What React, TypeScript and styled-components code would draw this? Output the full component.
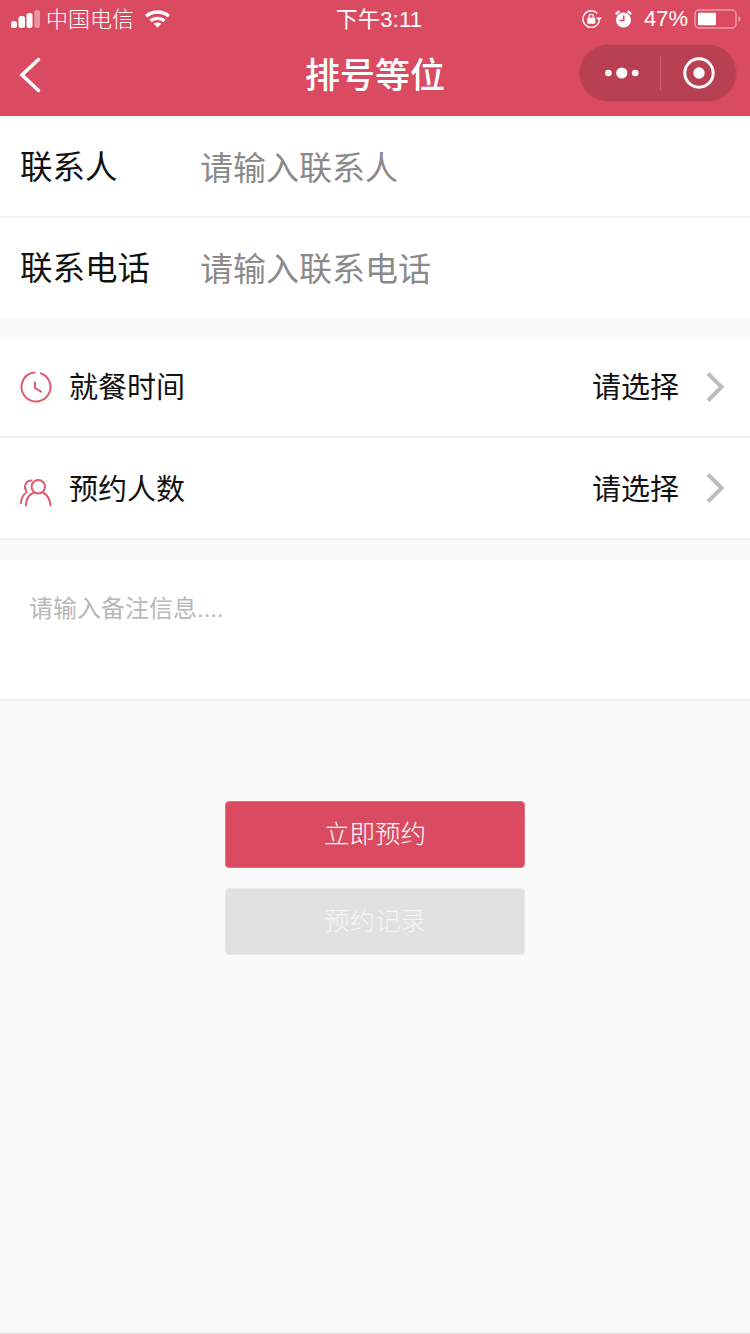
import React from 'react'
import styled, { createGlobalStyle } from 'styled-components'

const RED = '#da4b61'
const CJK = '"Noto Sans CJK SC", "Liberation Sans", sans-serif'
const LATIN_FIRST = '"Liberation Sans", "Noto Sans CJK SC", sans-serif'

const GlobalStyle = createGlobalStyle`
  html, body {
    margin: 0;
    padding: 0;
    background: #fafafa;
  }
  * {
    box-sizing: border-box;
  }
`

const Page = styled.div`
  width: 750px;
  height: 1334px;
  background: #fafafa;
  font-family: ${CJK};
  overflow: hidden;
  display: flex;
  flex-direction: column;
  border-bottom: 1px solid #dcdcdc;
`

const Header = styled.div`
  height: 116px;
  flex: none;
  background: ${RED};
  color: #fff;
  display: flex;
  flex-direction: column;
`

const StatusBar = styled.div`
  height: 40px;
  padding: 0 9px 3px 11px;
  display: grid;
  grid-template-columns: 1fr auto 1fr;
  align-items: center;
  font-size: 22px;
`

const StatusLeft = styled.div`
  display: flex;
  align-items: center;
`

const StatusRight = styled.div`
  display: flex;
  align-items: center;
  justify-content: flex-end;
  gap: 13px;
`

const Carrier = styled.span`
  margin: 0 11px 3px 6px;
  font-weight: 300;
`

const Clock = styled.span`
  margin: 0 0 3px 6px;
  font-family: ${LATIN_FIRST};
  font-size: 22px;
  letter-spacing: 0.2px;
`

const Percent = styled.span`
  font-family: "Liberation Sans", sans-serif;
  font-size: 22px;
  margin-left: -1px;
  margin-right: -7px;
`

const NavBar = styled.div`
  height: 76px;
  padding: 0 13px;
  display: grid;
  grid-template-columns: 1fr auto 1fr;
  align-items: center;
`

const BackSlot = styled.div`
  display: flex;
  margin: 0 0 6px 6px;
`

const Title = styled.div`
  font-size: 35px;
  font-weight: 500;
  line-height: 50px;
  margin-bottom: 10px;
`

const Capsule = styled.div`
  justify-self: end;
  width: 158px;
  height: 58px;
  margin-bottom: 11px;
  border-radius: 29px;
  background: #b93f53;
  border: 1px solid #c9495d;
  display: flex;
  align-items: center;
`

const CapsuleSide = styled.div<{ $nudge: number }>`
  flex: 1;
  display: flex;
  align-items: center;
  justify-content: center;
  padding-left: ${p => p.$nudge}px;
`

const CapsuleDivider = styled.div`
  width: 1px;
  height: 34px;
  background: #d0606f;
`

const Card = styled.div`
  background: #fff;
`

const FieldRow = styled.div<{ $divider?: boolean }>`
  height: ${p => (p.$divider ? 102 : 99)}px;
  display: flex;
  align-items: center;
  padding-left: 20px;
  border-bottom: ${p => (p.$divider ? '2px solid #f2f2f2' : 'none')};
`

const FieldLabel = styled.span`
  width: 180px;
  margin-bottom: 4px;
  font-size: 32.5px;
  color: #111;
`

const FieldHint = styled.span`
  margin-bottom: 1px;
  font-size: 33px;
  color: #8a8a8a;
`

const Gap = styled.div<{ $h: number }>`
  height: ${p => p.$h}px;
  flex: none;
`

const PickRow = styled.div<{ $tall?: boolean }>`
  height: ${p => (p.$tall ? 102 : 101)}px;
  display: flex;
  align-items: center;
  padding: 0 25px 0 20px;
  border-bottom: 2px solid #f1f1f1;
`

const PickLabel = styled.span`
  margin: 0 0 3px 17px;
  flex: 1;
  font-size: 29px;
  color: #111;
`

const PickValue = styled.span`
  margin: 0 26px 3px 0;
  font-size: 29px;
  color: #111;
`

const IconSlot = styled.div<{ $drop?: number }>`
  display: flex;
  margin-top: ${p => p.$drop ?? 0}px;
`

const Remark = styled.div`
  height: 141px;
  flex: none;
  background: #fff;
  padding: 32px 29px 0;
  font-family: ${LATIN_FIRST};
  font-size: 24px;
  line-height: 34px;
  color: #b8b8b8;
  border-bottom: 2px solid #f0f0f0;
`

const Actions = styled.div`
  margin-top: 100px;
  display: flex;
  flex-direction: column;
  align-items: center;
  gap: 20px;
`

const ActionButton = styled.div<{ $muted?: boolean }>`
  width: 300px;
  height: 67px;
  padding-bottom: 7px;
  border-radius: 4px;
  display: flex;
  align-items: center;
  justify-content: center;
  font-size: 25.5px;
  font-weight: 300;
  color: ${p => (p.$muted ? '#f4f4f4' : '#fff')};
  background: ${p => (p.$muted ? '#e1e1e1' : RED)};
  border: 1px solid ${p => (p.$muted ? '#e8e8e8' : '#e2707f')};
`

const Signal = () => (
  <svg width="29" height="18" viewBox="0 0 29 18" fill="#fff">
    <rect x="0" y="11" width="6" height="7" rx="2.500" />
    <rect x="7.500" y="6" width="6.500" height="12" rx="2.500" />
    <rect x="15.500" y="3" width="6" height="15" rx="2.500" />
    <rect x="23.300" y="0" width="5.700" height="18" rx="2.500" opacity="0.4" />
  </svg>
)

const Wifi = () => (
  <svg width="25" height="18" viewBox="0 0 25 18" fill="none" stroke="#fff" strokeWidth="3.400">
    <path d="M1.200 6.200C7.500 .6 17.500 .6 23.800 6.200" />
    <path d="M5.500 10.800C9.500 7.600 15.500 7.600 19.500 10.800" />
    <path d="M12.500 17.800l-3.800-4.200c2.200-1.500 5.400-1.500 7.600 0z" fill="#fff" stroke="none" />
  </svg>
)

const RotationLock = () => (
  <svg width="20" height="18" viewBox="0 0 20 18" fill="none">
    <path d="M17.400 10.500A8.300 8.300 0 1 1 15.300 3.400" stroke="#fff" strokeWidth="1.400" />
    <path d="M14 7.500h6l-3 3.600z" fill="#fff" />
    <rect x="5.300" y="7.800" width="8" height="6" rx="1" fill="#fff" />
    <path d="M7.200 7.800V6.400a2.100 2.100 0 0 1 4.200 0v1.400" stroke="#fff" strokeWidth="1.300" />
  </svg>
)

const Alarm = () => (
  <svg width="17" height="18" viewBox="0 0 17 18" fill="none">
    <circle cx="8.500" cy="10" r="7.500" fill="#fff" />
    <path d="M8.700 5.500V10.500H4.500" stroke={RED} strokeWidth="1.600" />
    <path d="M.8 4.200L4.300 1.200M16.200 4.200L12.700 1.200" stroke="#fff" strokeWidth="2.200" />
  </svg>
)

const Battery = () => (
  <svg width="47" height="20" viewBox="0 0 47 20" fill="none">
    <rect x="1" y="1" width="41" height="18" rx="4" stroke="#fff" strokeOpacity="0.45" strokeWidth="1.500" />
    <rect x="4" y="3.700" width="18" height="12.600" rx="1" fill="#fff" />
    <path d="M44.500 7c1.500.4 2 1.400 2 3s-.5 2.600-2 3z" fill="#fff" fillOpacity="0.45" />
  </svg>
)

const BackArrow = () => (
  <svg width="22" height="36" viewBox="0 0 22 36" fill="none" stroke="#fff" strokeWidth="3.500" strokeLinecap="round">
    <path d="M19.500 2.500L3 18l16.500 15.500" />
  </svg>
)

const MoreDots = () => (
  <svg width="34" height="12" viewBox="0 0 34 12" fill="#fff">
    <circle cx="3.400" cy="6" r="3.300" />
    <circle cx="16.800" cy="6" r="5.600" />
    <circle cx="30.200" cy="6" r="3.300" />
  </svg>
)

const CloseRing = () => (
  <svg width="32" height="32" viewBox="0 0 32 32" fill="none">
    <circle cx="16" cy="16" r="14.200" stroke="#fff" strokeWidth="3" />
    <circle cx="16" cy="16" r="5.700" fill="#fff" />
  </svg>
)

const ClockIcon = () => (
  <svg width="32" height="32" viewBox="0 0 32 32" fill="none" stroke="#e0596e" strokeWidth="2" strokeLinecap="round">
    <circle cx="16" cy="16" r="14.500" strokeDasharray="84 7" transform="rotate(-70 16 16)" />
    <path d="M15 11.500V17l6 3.700" />
  </svg>
)

const PeopleIcon = () => (
  <svg width="32" height="28" viewBox="0 0 32 28" fill="none" stroke="#e0596e" strokeWidth="2" strokeLinecap="round">
    <circle cx="18.300" cy="7.700" r="6.700" />
    <path d="M6 26.500c.2-6.500 3-11 7.500-12.500" />
    <path d="M23.500 14c3.800 2 6.500 6.500 7 12.500" />
    <path d="M11.500 1.500C6 1.500 3 7.500 6.500 12" />
    <path d="M1 24c.2-4.500 2-8.500 5.500-10.500" />
  </svg>
)

const Chevron = () => (
  <svg width="20" height="32" viewBox="0 0 20 32" fill="none" stroke="#bdbdbd" strokeWidth="4">
    <path d="M3 2.500L16.500 16 3 29.500" />
  </svg>
)

export default function App() {
  return (
    <Page>
      <GlobalStyle />
      <Header>
        <StatusBar>
          <StatusLeft>
            <Signal />
            <Carrier>中国电信</Carrier>
            <Wifi />
          </StatusLeft>
          <Clock>下午3:11</Clock>
          <StatusRight>
            <RotationLock />
            <Alarm />
            <Percent>47%</Percent>
            <Battery />
          </StatusRight>
        </StatusBar>
        <NavBar>
          <BackSlot>
            <BackArrow />
          </BackSlot>
          <Title>排号等位</Title>
          <Capsule>
            <CapsuleSide $nudge={5}>
              <MoreDots />
            </CapsuleSide>
            <CapsuleDivider />
            <CapsuleSide $nudge={1}>
              <CloseRing />
            </CapsuleSide>
          </Capsule>
        </NavBar>
      </Header>
      <Card>
        <FieldRow $divider>
          <FieldLabel>联系人</FieldLabel>
          <FieldHint>请输入联系人</FieldHint>
        </FieldRow>
        <FieldRow>
          <FieldLabel>联系电话</FieldLabel>
          <FieldHint>请输入联系电话</FieldHint>
        </FieldRow>
      </Card>
      <Gap $h={20} />
      <Card>
        <PickRow>
          <IconSlot>
            <ClockIcon />
          </IconSlot>
          <PickLabel>就餐时间</PickLabel>
          <PickValue>请选择</PickValue>
          <Chevron />
        </PickRow>
        <PickRow $tall>
          <IconSlot $drop={10}>
            <PeopleIcon />
          </IconSlot>
          <PickLabel>预约人数</PickLabel>
          <PickValue>请选择</PickValue>
          <Chevron />
        </PickRow>
      </Card>
      <Gap $h={20} />
      <Remark>请输入备注信息....</Remark>
      <Actions>
        <ActionButton>立即预约</ActionButton>
        <ActionButton $muted>预约记录</ActionButton>
      </Actions>
    </Page>
  )
}
